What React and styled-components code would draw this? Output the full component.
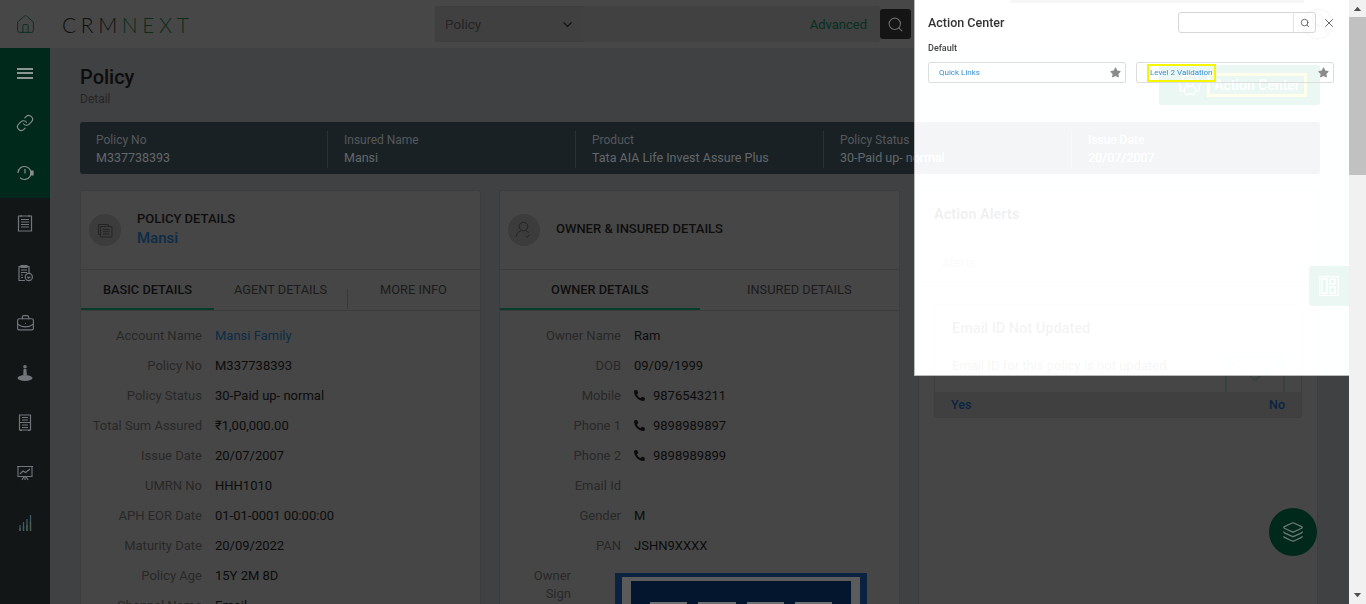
import React from 'react';
import styled, { createGlobalStyle } from 'styled-components';
import { FaPhoneAlt, FaStar } from 'react-icons/fa';
import { BriefcaseBusiness, ChevronDown, Home, Layers, Link, Search, X } from 'lucide-react';

const basicRows = [
  ['Account Name', 'Mansi Family', true],
  ['Policy No', 'M337738393'],
  ['Policy Status', '30-Paid up- normal'],
  ['Total Sum Assured', '₹1,00,000.00'],
  ['Issue Date', '20/07/2007'],
  ['UMRN No', 'HHH1010'],
  ['APH EOR Date', '01-01-0001 00:00:00'],
  ['Maturity Date', '20/09/2022'],
  ['Policy Age', '15Y 2M 8D'],
  ['Channel Name', 'Email'],
];

const ownerRows = [
  ['Owner Name', 'Ram'],
  ['DOB', '09/09/1999'],
  ['Mobile', '9876543211', false, true],
  ['Phone 1', '9898989897', false, true],
  ['Phone 2', '9898989899', false, true],
  ['Email Id', ''],
  ['Gender', 'M'],
  ['PAN', 'JSHN9XXXX'],
];

const bannerItems = [
  ['Policy No', 'M337738393'],
  ['Insured Name', 'Mansi'],
  ['Product', 'Tata AIA Life Invest Assure Plus'],
  ['Policy Status', '30-Paid up- normal'],
  ['Issue Date', '20/07/2007'],
];

function IconClock() {
  return (
    <svg width="18" height="18" viewBox="0 0 18 18" fill="none" stroke="currentColor" strokeWidth="1.2">
      <path d="M2 9a6.5 6.5 0 1 1 1.9 4.6" />
      <path d="M9 5v4.5" />
      <path d="M15 7h2v4h-2z" fill="currentColor" />
    </svg>
  );
}

function IconClipboardLines() {
  return (
    <svg width="18" height="18" viewBox="0 0 18 18" fill="none" stroke="currentColor" strokeWidth="1.2">
      <path d="M2.500 2h13v15h-13z" />
      <path d="M5 1v2M13 1v2M5 5.500h8M5 8h8M5 10.500h8M5 13h8" />
    </svg>
  );
}

function IconClipboardCheck() {
  return (
    <svg width="18" height="18" viewBox="0 0 18 18" fill="none" stroke="currentColor" strokeWidth="1.2">
      <path d="M9 16.500H3V2.500h10v7" />
      <path d="M5 1.500h6v2H5zM5 6h6M5 8.500h6M5 11h2M5 13.500h2" />
      <circle cx="12.800" cy="13" r="3.600" />
      <path d="M11.200 12.600l1.600 1.500 1.600-1.500" />
    </svg>
  );
}

function IconStamp() {
  return (
    <svg width="18" height="18" viewBox="0 0 18 18" fill="currentColor">
      <circle cx="9" cy="2.800" r="1.800" />
      <path d="M7.600 5h2.800l.4 6H7.200z" />
      <ellipse cx="9" cy="14" rx="7.500" ry="3" />
    </svg>
  );
}

function IconCabinet() {
  return (
    <svg width="18" height="18" viewBox="0 0 18 18" fill="none" stroke="currentColor" strokeWidth="1.2">
      <path d="M3.500 1h11v15h-11zM3.500 8.500h11" />
      <path d="M6 3.500h6M6 6h6M6 11h6M6 13.500h6" />
      <path d="M4 16.500h2M12 16.500h2" />
    </svg>
  );
}

function IconBoard() {
  return (
    <svg width="18" height="18" viewBox="0 0 18 18" fill="none" stroke="currentColor" strokeWidth="1.1">
      <path d="M1 2.500h16M2 2.500v10h14v-10" />
      <path d="M4 10l3-3 2.500 1.500L14 5" />
      <path d="M6 16l2-3.500M12 16l-2-3.500M9 12.500V16" />
    </svg>
  );
}

function IconBars() {
  return (
    <svg width="18" height="18" viewBox="0 0 18 18" fill="none" strokeWidth="1.300">
      <path d="M4 17v-6M7.500 17V8M11 17V5M14.500 17V1" stroke="#3b5a6a" />
      <path d="M4 17v-3M7.500 17v-5M11 17v-6M14.500 17V8" stroke="#4a5d50" />
    </svg>
  );
}

function IconPanels() {
  return (
    <svg width="20" height="20" viewBox="0 0 20 20" fill="none" stroke="#474747" strokeWidth="1.300">
      <path d="M.7.700h18.600v18.600H.7zM3 3h5v14H3zM11 3h5v5h-5zM11 11h5v6h-5z" />
    </svg>
  );
}

function IconDocs() {
  return (
    <svg width="16" height="16" viewBox="0 0 16 16" fill="none" stroke="#242424" strokeWidth="1">
      <path d="M3 12.500H1.500V2.500h10V4" />
      <path d="M3.500 4.500h11.500v10.500H3.500zM6 7.500h6.500M6 9.700h6.500M6 12h6.500" />
    </svg>
  );
}

function IconOwner() {
  return (
    <svg width="18" height="18" viewBox="0 0 18 18" fill="none" stroke="#242424" strokeWidth="1">
      <circle cx="8.500" cy="5.500" r="4.300" />
      <path d="M1 16c.5-3.500 2.500-5.500 5-6M11 10c1 .3 2 .9 2.600 1.600M10.800 15l1.400 1.300 2.600-2.800" />
    </svg>
  );
}

export default function App() {
  return (
    <Shell>
      <GlobalStyle />
      <Main>
        <Header>
          <HomeCell>
            <Home size={21} strokeWidth={1.1} />
          </HomeCell>
          <Logo>
            CRM<LogoNext>NEXT</LogoNext>
          </Logo>
          <SearchBar>
            <SearchSelect>
              Policy
              <ChevronDown size={15} strokeWidth={1.8} color="#0d0d0d" />
            </SearchSelect>
            <AdvancedLink>Advanced</AdvancedLink>
          </SearchBar>
          <SearchButton>
            <Search size={17} strokeWidth={1.6} />
          </SearchButton>
          <HeaderStrip />
          <HeaderBell viewBox="0 0 16 18" width="16" height="18" fill="none" stroke="#3d3d3d" strokeWidth="1">
            <path d="M1 14c1.500-1.500 2-3 2-6a5 5 0 0 1 10 0c0 3 .5 4.500 2 6zM6.500 16h3M8 1v1" />
          </HeaderBell>
          <HeaderAvatar viewBox="0 0 32 32" width="32" height="32" fill="none" stroke="#333" strokeWidth="2.200">
            <circle cx="16" cy="16" r="14.800" />
            <circle cx="16" cy="12" r="5.500" />
            <path d="M7 26c.5-5 4-8 9-8s8.500 3 9 8" />
          </HeaderAvatar>
        </Header>
        <Body>
          <Sidebar>
            <GreenNav>
              <NavItem>
                <MenuBars />
              </NavItem>
              <NavItem>
                <Link size={18} strokeWidth={1.5} />
              </NavItem>
              <NavItem>
                <IconClock />
              </NavItem>
            </GreenNav>
            <NavItem>
              <IconClipboardLines />
            </NavItem>
            <NavItem>
              <IconClipboardCheck />
            </NavItem>
            <NavItem>
              <BriefcaseBusiness size={19} strokeWidth={1.5} />
            </NavItem>
            <NavItem>
              <IconStamp />
            </NavItem>
            <NavItem>
              <IconCabinet />
            </NavItem>
            <NavItem>
              <IconBoard />
            </NavItem>
            <NavItem>
              <IconBars />
            </NavItem>
          </Sidebar>
          <Content>
            <PageHead>
              <div>
                <PageTitle>Policy</PageTitle>
                <PageSub>Detail</PageSub>
              </div>
              <ActionCenterButton>
                <svg width="26" height="26" viewBox="0 0 26 26" fill="none" stroke="#474747" strokeWidth="1.200">
                  <path d="M13 2l3 2.500 4-.5 1 4 3 3-2 3.500.5 4-4 1-2.500 3.500-3-1.500-3.500 1.500-2.500-3.500-4-1 .5-4L2 11l3-3 1-4 4 .5z" />
                  <circle cx="13" cy="10.500" r="3.500" />
                  <path d="M7 19c.5-3.500 3-5 6-5s5.500 1.500 6 5" />
                </svg>
                <ActionCenterLabel>Action Center</ActionCenterLabel>
              </ActionCenterButton>
            </PageHead>
            <Banner>
              {bannerItems.map(([label, value]) => (
                <BannerItem key={label}>
                  <BannerLabel>{label}</BannerLabel>
                  <BannerValue>{value}</BannerValue>
                </BannerItem>
              ))}
            </Banner>
            <CardGrid>
              <Card>
                <CardHead>
                  <IconCircle>
                    <IconDocs />
                  </IconCircle>
                  <div>
                    <CardTitle>POLICY DETAILS</CardTitle>
                    <CardName>Mansi</CardName>
                  </div>
                </CardHead>
                <Tabs>
                  <Tab $active>BASIC DETAILS</Tab>
                  <Tab>AGENT DETAILS</Tab>
                  <Tab>MORE INFO</Tab>
                </Tabs>
                <Rows>
                  {basicRows.map(([label, value, link]) => (
                    <Row key={label}>
                      <RowLabel>{label}</RowLabel>
                      <RowValue $link={link}>{value}</RowValue>
                    </Row>
                  ))}
                </Rows>
              </Card>
              <Card>
                <CardHead>
                  <IconCircle>
                    <IconOwner />
                  </IconCircle>
                  <CardTitle>OWNER &amp; INSURED DETAILS</CardTitle>
                </CardHead>
                <Tabs>
                  <Tab $active>OWNER DETAILS</Tab>
                  <Tab>INSURED DETAILS</Tab>
                </Tabs>
                <Rows>
                  {ownerRows.map(([label, value, link, phone]) => (
                    <Row key={label}>
                      <RowLabel>{label}</RowLabel>
                      <RowValue $link={link}>
                        {phone && <FaPhoneAlt size={11} />}
                        {value}
                      </RowValue>
                    </Row>
                  ))}
                  <SignRow>
                    <SignLabel>Owner Sign</SignLabel>
                    <SignImage>
                      <SignInner>
                        <SignBox />
                        <SignBox />
                        <SignBox />
                        <SignBox />
                      </SignInner>
                    </SignImage>
                  </SignRow>
                </Rows>
              </Card>
              <Card>
                <AlertsHead>Action Alerts</AlertsHead>
                <PillRow>
                  <Pill>Alerts</Pill>
                </PillRow>
                <AlertCard>
                  <AlertBody>
                    <div>
                      <AlertTitle>Email ID Not Updated</AlertTitle>
                      <AlertText>Email ID for this policy is not updated.</AlertText>
                    </div>
                    <Envelope viewBox="0 0 60 60" width="60" height="60" fill="none" stroke="#36423e" strokeWidth="2">
                      <path d="M1 1h58v58H1zM1 2l29 22 29-22" />
                    </Envelope>
                  </AlertBody>
                  <AlertFooter>
                    <span>Yes</span>
                    <span>No</span>
                  </AlertFooter>
                </AlertCard>
              </Card>
            </CardGrid>
          </Content>
        </Body>
        <SideTab>
          <IconPanels />
        </SideTab>
        <Fab>
          <Layers size={22} strokeWidth={1.4} />
        </Fab>
        <Panel>
          <PanelHead>
            <PanelTitle>Action Center</PanelTitle>
            <PanelSearch>
              <PanelSearchField />
              <PanelSearchIcon>
                <Search size={10} strokeWidth={1.8} />
              </PanelSearchIcon>
            </PanelSearch>
            <CloseIcon>
              <X size={14} strokeWidth={1.7} />
            </CloseIcon>
          </PanelHead>
          <GroupLabel>Default</GroupLabel>
          <LinkGrid>
            <LinkTile>
              <LinkText>Quick Links</LinkText>
              <FaStar size={11} color="#8b8b8b" />
            </LinkTile>
            <LinkTile>
              <LinkText $marked>Level 2 Validation</LinkText>
              <FaStar size={11} color="#8b8b8b" />
            </LinkTile>
          </LinkGrid>
        </Panel>
      </Main>
      <ScrollTrack>
        <ScrollArrow />
        <ScrollThumb />
        <ScrollArrow $down />
      </ScrollTrack>
    </Shell>
  );
}

const GlobalStyle = createGlobalStyle`
  html, body {
    margin: 0;
    padding: 0;
    overflow: hidden;
  }
  body {
    font-family: "Roboto", "Noto Sans", sans-serif;
    font-size: 13px;
    color: #141414;
  }
  * {
    box-sizing: border-box;
  }
`;

const Shell = styled.div`
  display: flex;
  width: 1366px;
  height: 604px;
  overflow: hidden;
`;

const Main = styled.div`
  position: relative;
  display: flex;
  flex-direction: column;
  width: 1349px;
  height: 604px;
  overflow: hidden;
  background: #404142;
`;

const Header = styled.header`
  position: relative;
  display: flex;
  align-items: center;
  flex: none;
  height: 48px;
  background: #474747;
`;

const HomeCell = styled.div`
  display: flex;
  justify-content: center;
  width: 50px;
  margin-top: 1px;
  color: #0b2e22;
`;

const Logo = styled.div`
  width: 373px;
  margin-left: 12px;
  font-family: "Lato", sans-serif;
  font-size: 21px;
  font-weight: 300;
  letter-spacing: 4.600px;
  color: #0f0f0f;
`;

const LogoNext = styled.span`
  color: #0c2c17;
`;

const SearchBar = styled.div`
  display: flex;
  align-items: center;
  justify-content: space-between;
  width: 445px;
  height: 36px;
  background: #414141;
  border-radius: 3px;
`;

const SearchSelect = styled.div`
  display: flex;
  align-items: center;
  justify-content: space-between;
  width: 147px;
  height: 36px;
  padding: 0 7px 0 10px;
  font-size: 13.500px;
  color: #252525;
  background: #404040;
  border-radius: 3px;
`;

const AdvancedLink = styled.span`
  margin-right: 13px;
  font-size: 13px;
  color: #05301f;
`;

const SearchButton = styled.div`
  display: flex;
  align-items: center;
  justify-content: center;
  width: 31px;
  height: 30px;
  color: #6a6a6a;
  background: #151515;
  border-radius: 3px;
`;

const HeaderStrip = styled.div`
  position: absolute;
  top: 0;
  left: 1010px;
  width: 294px;
  height: 3px;
  background: #262626;
`;

const HeaderBell = styled.svg`
  position: absolute;
  top: 14px;
  left: 1258px;
`;

const HeaderAvatar = styled.svg`
  position: absolute;
  top: 8px;
  left: 1302px;
`;

const Body = styled.div`
  display: flex;
  flex: 1;
  min-height: 0;
`;

const Sidebar = styled.nav`
  flex: none;
  width: 50px;
  color: #72767a;
  background: #131617;
`;

const GreenNav = styled.div`
  color: #8a908c;
  background: #00281b;
`;

const NavItem = styled.div`
  display: flex;
  align-items: center;
  justify-content: center;
  height: 50px;
`;

const MenuBars = styled.div`
  width: 16px;
  height: 11px;
  border-top: 2px solid #8e9490;
  border-bottom: 2px solid #8e9490;
  background: linear-gradient(#8e9490, #8e9490) center / 100% 2px no-repeat;
`;

const Content = styled.main`
  flex: 1;
  min-width: 0;
  padding: 17px 29px 0 30px;
`;

const PageHead = styled.div`
  display: flex;
  align-items: flex-start;
  justify-content: space-between;
  height: 57px;
`;

const PageTitle = styled.h1`
  margin: -1px 0 0;
  font-size: 20px;
  line-height: 26px;
  font-weight: 500;
  color: #0d0d0d;
`;

const PageSub = styled.div`
  font-size: 12px;
  line-height: 18px;
  color: #252525;
`;

const ActionCenterButton = styled.div`
  display: flex;
  align-items: center;
  gap: 4px;
  width: 161px;
  height: 40px;
  padding-left: 18px;
  background: #00281b;
  border-radius: 3px;
`;

const ActionCenterLabel = styled.span`
  width: 100px;
  height: 24px;
  font-size: 14px;
  line-height: 18px;
  font-weight: 500;
  text-align: center;
  white-space: nowrap;
  color: #474747;
  border: 3px solid #474700;
`;

const Banner = styled.section`
  display: grid;
  grid-template-columns: 247px repeat(4, 248px);
  height: 52px;
  padding: 9px 0 6px;
  background: #1a2125;
  border-radius: 3px;
`;

const BannerItem = styled.div`
  padding-left: 16px;
  border-left: 1px solid #2a3237;

  &:first-child {
    border-left: 0;
  }
`;

const BannerLabel = styled.div`
  font-size: 12px;
  line-height: 18px;
  color: #55595c;
`;

const BannerValue = styled.div`
  font-size: 12.500px;
  line-height: 18px;
  color: #64686b;
`;

const CardGrid = styled.div`
  display: grid;
  grid-template-columns: 401px 401px 400px;
  gap: 18px;
  margin-top: 16px;
`;

const Card = styled.article`
  height: 500px;
  background: #464646;
  border: 1px solid #3d3d3d;
  border-radius: 3px;
`;

const CardHead = styled.div`
  display: flex;
  align-items: center;
  gap: 16px;
  height: 79px;
  padding: 0 8px;
  border-bottom: 1px solid #3c3c3c;
`;

const IconCircle = styled.div`
  display: flex;
  align-items: center;
  justify-content: center;
  flex: none;
  width: 32px;
  height: 32px;
  border-radius: 50%;
  background: #3c3c3c;
`;

const CardTitle = styled.div`
  margin-top: -2px;
  font-size: 13px;
  line-height: 18px;
  font-weight: 500;
  color: #0e0e0e;
`;

const CardName = styled.div`
  font-size: 15px;
  line-height: 20px;
  font-weight: 500;
  color: #0c2c48;
`;

const Tabs = styled.div`
  display: flex;
  height: 41px;
  border-bottom: 1px solid #3c3c3c;
`;

const Tab = styled.div`
  position: relative;
  display: flex;
  align-items: center;
  justify-content: center;
  flex: 1;
  font-size: 12.800px;
  font-weight: ${({ $active }) => ($active ? 500 : 400)};
  color: ${({ $active }) => ($active ? '#0e0e0e' : '#1b1b1b')};
  border-bottom: 2px solid ${({ $active }) => ($active ? '#053d2a' : 'transparent')};

  & + &::before {
    content: '';
    position: absolute;
    left: 0;
    bottom: -1px;
    height: 20px;
    border-left: 1px solid #383838;
  }
`;

const Rows = styled.div`
  padding-top: 9px;
`;

const Row = styled.div`
  display: grid;
  grid-template-columns: 121px 1fr;
  align-items: center;
  gap: 13px;
  height: 30px;
`;

const RowLabel = styled.div`
  text-align: right;
  color: #282828;
`;

const RowValue = styled.div`
  display: flex;
  align-items: center;
  gap: 8px;
  color: ${({ $link }) => ($link ? '#0c2c48' : '#0c0c0c')};
`;

const SignRow = styled.div`
  display: flex;
  gap: 44px;
  padding-top: 7px;
`;

const SignLabel = styled.div`
  width: 71px;
  padding-left: 29px;
  text-align: right;
  line-height: 18px;
  color: #282828;
`;

const SignImage = styled.div`
  width: 252px;
  height: 90px;
  margin-top: 6px;
  padding: 4px 9px;
  background: #5b5b5b;
  border: solid #0b2340;
  border-width: 4px 7px;
`;

const SignInner = styled.div`
  display: flex;
  gap: 11px;
  height: 70px;
  padding: 21px 19px 0;
  background: #03162e;
`;

const SignBox = styled.div`
  width: 44px;
  height: 20px;
  background: #6e7074;
`;

const AlertsHead = styled.div`
  display: flex;
  align-items: center;
  height: 47px;
  padding-left: 15px;
  font-size: 14.500px;
  font-weight: 700;
  color: #111;
  border-bottom: 1px solid #3c3c3c;
`;

const PillRow = styled.div`
  height: 49px;
  padding: 12px 15px;
  border-bottom: 1px solid #3c3c3c;
`;

const Pill = styled.span`
  display: inline-block;
  width: 50px;
  height: 25px;
  line-height: 23px;
  text-align: center;
  color: #333;
  border: 1px solid #3f3f3f;
  border-radius: 12px;
`;

const AlertCard = styled.div`
  margin: 17px 15px 0;
  border: 1px solid #3d3d3d;
  border-radius: 3px;
`;

const AlertBody = styled.div`
  display: flex;
  justify-content: space-between;
  height: 87px;
  padding: 13px 16px 0 17px;
  overflow: hidden;
`;

const AlertTitle = styled.div`
  font-size: 14.500px;
  line-height: 22px;
  font-weight: 500;
  color: #1c1c1c;
`;

const AlertText = styled.div`
  margin-top: 16px;
  line-height: 20px;
  color: #222;
`;

const Envelope = styled.svg`
  flex: none;
  margin-top: 38px;
`;

const AlertFooter = styled.div`
  display: flex;
  justify-content: space-between;
  height: 25px;
  padding: 0 16px;
  font-size: 12.500px;
  line-height: 25px;
  font-weight: 500;
  color: #0a2440;
  background: #404040;
`;

const SideTab = styled.div`
  position: absolute;
  top: 266px;
  right: 0;
  display: flex;
  align-items: center;
  justify-content: center;
  width: 40px;
  height: 40px;
  background: #00281b;
  border-radius: 3px 0 0 3px;
`;

const Fab = styled.div`
  position: absolute;
  top: 508px;
  left: 1269px;
  display: flex;
  align-items: center;
  justify-content: center;
  width: 48px;
  height: 48px;
  color: #6e7a74;
  background: #00281b;
  border-radius: 50%;
`;

const Panel = styled.aside`
  position: absolute;
  top: 0;
  right: 0;
  width: 435px;
  height: 376px;
  padding: 12px 15px 0 13px;
  background: rgba(255, 255, 255, 0.92);
  backdrop-filter: brightness(3.75);
  border-left: 1px solid #bbb;
  border-bottom: 1px solid #bbb;
`;

const PanelHead = styled.div`
  display: flex;
  align-items: center;
  height: 21px;
`;

const PanelTitle = styled.div`
  flex: 1;
  font-size: 12.500px;
  font-weight: 500;
  color: #333;
`;

const PanelSearch = styled.div`
  display: flex;
  width: 138px;
  height: 21px;
  border: 1px solid #d6d6d6;
  border-radius: 3px;
`;

const PanelSearchField = styled.div`
  flex: 1;
`;

const PanelSearchIcon = styled.div`
  display: flex;
  align-items: center;
  justify-content: center;
  width: 22px;
  color: #444;
  border-left: 1px solid #e2e2e2;
`;

const CloseIcon = styled.div`
  display: flex;
  justify-content: center;
  width: 14px;
  margin-right: -2px;
  margin-left: 6px;
  color: #666;
`;

const GroupLabel = styled.div`
  margin-top: 8px;
  font-size: 9px;
  line-height: 14px;
  font-weight: 500;
  color: #444;
`;

const LinkGrid = styled.div`
  display: grid;
  grid-template-columns: 198px 198px;
  gap: 10px;
  margin-top: 7px;
`;

const LinkTile = styled.div`
  display: flex;
  align-items: center;
  justify-content: space-between;
  height: 21px;
  padding: 0 4px 0 10px;
  border: 1px solid #ddd;
  border-radius: 2px;
`;

const LinkText = styled.span`
  padding: ${({ $marked }) => ($marked ? '1px 1px' : '0')};
  font-size: 8px;
  line-height: 12px;
  color: #3a8fd6;
  border: ${({ $marked }) => ($marked ? '2px solid #f6f600' : '0')};
`;

const ScrollTrack = styled.div`
  display: flex;
  flex-direction: column;
  flex: none;
  width: 17px;
  height: 604px;
  background: #f1f1f1;
`;

const ScrollArrow = styled.div`
  flex: none;
  height: 17px;
  margin-top: ${({ $down }) => ($down ? 'auto' : '0')};
  background: #505050;
  clip-path: ${({ $down }) =>
    $down ? 'polygon(29% 35%, 71% 35%, 50% 60%)' : 'polygon(50% 40%, 71% 65%, 29% 65%)'};
`;

const ScrollThumb = styled.div`
  flex: none;
  height: 158px;
  background: #c1c1c1;
`;
